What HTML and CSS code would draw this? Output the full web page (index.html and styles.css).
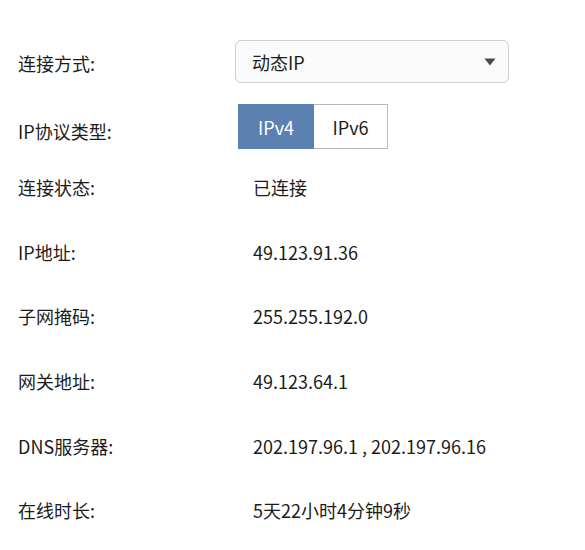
FILE: index.html
```html
<!DOCTYPE html>
<html lang="zh-CN">
<head>
<meta charset="utf-8">
<link rel="stylesheet" href="styles.css">
</head>
<body>
<div class="panel">
  <div class="row row-select">
    <div class="label">连接方式:</div>
    <div class="select">
      <span class="select-text">动态IP</span>
      <svg class="caret" width="12" height="8" viewBox="0 0 12 8"><path d="M0.5 0.5 H11.5 L6 7.5 Z" fill="#4a4a4a"/></svg>
    </div>
  </div>
  <div class="row row-toggle">
    <div class="label label-toggle">IP协议类型:</div>
    <div class="toggle">
      <span class="tbtn active">IPv4</span>
      <span class="tbtn">IPv6</span>
    </div>
  </div>
  <div class="row row-text"><div class="label">连接状态:</div><div class="value">已连接</div></div>
  <div class="row row-text"><div class="label">IP地址:</div><div class="value">49.123.91.36</div></div>
  <div class="row row-text"><div class="label">子网掩码:</div><div class="value">255.255.192.0</div></div>
  <div class="row row-text"><div class="label">网关地址:</div><div class="value">49.123.64.1</div></div>
  <div class="row row-text"><div class="label">DNS服务器:</div><div class="value">202.197.96.1 , 202.197.96.16</div></div>
  <div class="row row-text"><div class="label">在线时长:</div><div class="value">5天22小时4分钟9秒</div></div>
</div>
</body>
</html>
```
FILE: styles.css
```css
html, body {
  margin: 0;
  padding: 0;
  background: #ffffff;
}
body {
  font-family: "Noto Sans CJK SC", "Microsoft YaHei", sans-serif;
  font-size: 18px;
  color: #1c1c1c;
}
.panel {
  padding: 40px 0 0 18px;
  display: flex;
  flex-direction: column;
}
.row {
  display: grid;
  grid-template-columns: 217px 1fr;
  align-items: start;
}
.label {
  line-height: 24px;
  white-space: nowrap;
}
.row-select .label {
  padding-top: 11px;
}
.select {
  height: 41px;
  border: 1px solid #cfcfcf;
  border-radius: 6px;
  background: #fafafa;
  display: flex;
  align-items: center;
  justify-content: space-between;
  padding: 0 12px 0 16px;
  box-sizing: content-box;
  width: 244px;
}
.select-text {
  line-height: 24px;
}
.caret {
  display: block;
}
.row-toggle {
  margin-top: 21px;
}
.label-toggle {
  padding-top: 15px;
}
.toggle {
  display: flex;
  margin-left: 3px;
}
.tbtn {
  width: 73px;
  height: 43px;
  border: 1px solid #b9b9b9;
  display: flex;
  align-items: center;
  justify-content: center;
  background: #ffffff;
  color: #1c1c1c;
}
.tbtn + .tbtn {
  border-left: none;
}
.tbtn.active {
  background: #5a81b0;
  border-color: #5a81b0;
  color: #ffffff;
  width: 74px;
}
.row-text {
  height: 64.6px;
  align-items: center;
}
.row-toggle + .row-text {
  margin-top: 6px;
}
.value {
  padding-left: 18px;
  line-height: 24px;
  white-space: nowrap;
}
```
